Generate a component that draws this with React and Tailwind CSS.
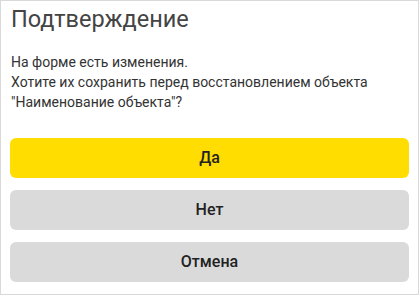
export default function App() {
  const buttons = [
    { label: 'Да', className: 'bg-[#ffdd00]' },
    { label: 'Нет', className: 'bg-[#dadada]' },
    { label: 'Отмена', className: 'bg-[#dadada]' },
  ];

  return (
    <div
      className="w-[419px] h-[295px] bg-white border border-[#d9d9d9] px-[9px] pt-[3px] flex flex-col"
      style={{ fontFamily: 'Roboto, "Noto Sans", sans-serif' }}
    >
      <h1 className="text-[23.5px] leading-[30px] text-[#444] pl-[1px]">Подтверждение</h1>
      <div className="mt-[18px] text-[14px] leading-[20px] text-[#333] pl-[1px]">
        <p>На форме есть изменения.</p>
        <p>Хотите их сохранить перед восстановлением объекта</p>
        <p>"Наименование объекта"?</p>
      </div>
      <div className="mt-[26px] flex flex-col gap-[12px]">
        {buttons.map((b) => (
          <button
            key={b.label}
            className={`${b.className} h-[40px] w-full rounded-[6px] text-[16px] font-medium text-[#222]`}
          >
            {b.label}
          </button>
        ))}
      </div>
    </div>
  );
}
